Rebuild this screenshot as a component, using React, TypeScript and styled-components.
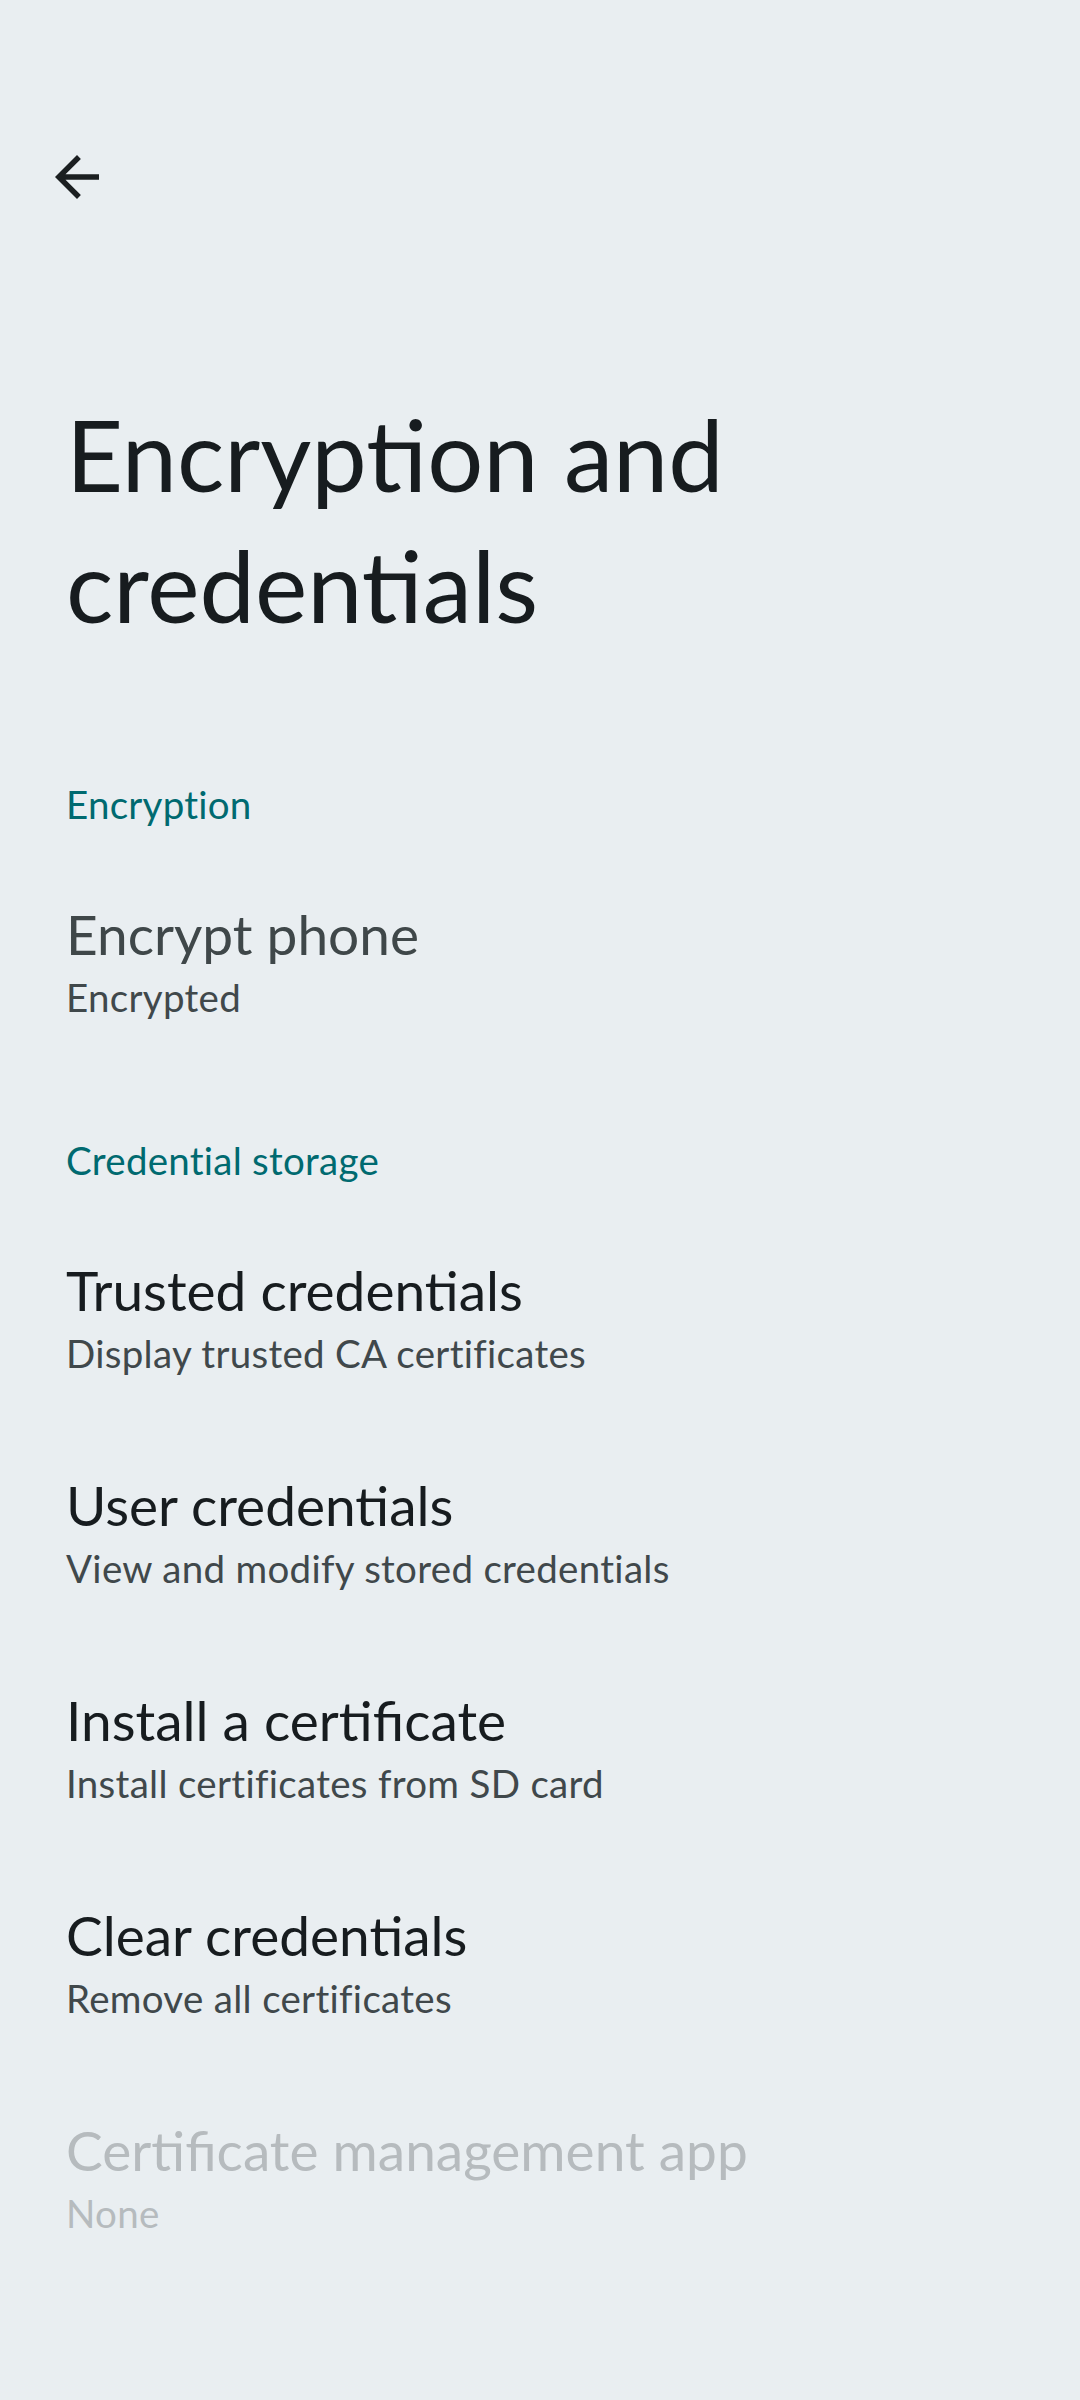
import React from "react";
import styled, { createGlobalStyle } from "styled-components";

const GlobalStyle = createGlobalStyle`
  html, body {
    margin: 0;
    padding: 0;
    background: #e9eef1;
  }
  body {
    font-family: Lato, "Open Sans", sans-serif;
    -webkit-font-smoothing: antialiased;
  }
`;

type Pref = {
    title: string;
    summary: string;
    tone?: "normal" | "muted" | "disabled";
};

const sections: { header: string; items: Pref[] }[] = [
    {
        header: "Encryption",
        items: [{ title: "Encrypt phone", summary: "Encrypted", tone: "muted" }],
    },
    {
        header: "Credential storage",
        items: [
            { title: "Trusted credentials", summary: "Display trusted CA certificates" },
            { title: "User credentials", summary: "View and modify stored credentials" },
            { title: "Install a certificate", summary: "Install certificates from SD card" },
            { title: "Clear credentials", summary: "Remove all certificates" },
            { title: "Certificate management app", summary: "None", tone: "disabled" },
        ],
    },
];

function BackArrow() {
    return (
        <svg width="66" height="66" viewBox="0 0 24 24" fill="#1b1f21">
            <path d="M20 11H7.83l5.59-5.59L12 4l-8 8 8 8 1.41-1.41L7.83 13H20v-2z" />
        </svg>
    );
}

export default function App() {
    return (
        <Page>
            <GlobalStyle />
            <Toolbar>
                <BackButton aria-label="Back">
                    <BackArrow />
                </BackButton>
            </Toolbar>
            <Title>Encryption and credentials</Title>
            {sections.map((section) => (
                <Section key={section.header}>
                    <Header>{section.header}</Header>
                    {section.items.map((item) => (
                        <Item key={item.title}>
                            <ItemTitle tone={item.tone}>{item.title}</ItemTitle>
                            <ItemSummary tone={item.tone}>{item.summary}</ItemSummary>
                        </Item>
                    ))}
                </Section>
            ))}
        </Page>
    );
}

const Page = styled.div`
    min-height: 2400px;
    background: #e9eef1;
    display: flex;
    flex-direction: column;
`;

const Toolbar = styled.div`
    display: flex;
    align-items: center;
    padding: 144px 0 0 44px;
`;

const BackButton = styled.button`
    width: 66px;
    height: 66px;
    padding: 0;
    border: 0;
    background: transparent;
    display: flex;
    align-items: center;
    justify-content: center;
`;

const Title = styled.h1`
    margin: 178px 0 0;
    padding: 0 300px 0 66px;
    font-size: 99px;
    line-height: 131px;
    font-weight: 400;
    color: #171c1f;
`;

const Section = styled.section`
    display: flex;
    flex-direction: column;
    &:first-of-type {
        margin-top: 64px;
    }
`;

const Header = styled.div`
    padding: 67px 66px 28px;
    font-size: 38.5px;
    line-height: 46px;
    letter-spacing: 0.25px;
    color: #006a70;
`;

const Item = styled.div`
    padding: 44px 66px;
    display: flex;
    flex-direction: column;
`;

const titleColor = (tone?: string) =>
    tone === "disabled" ? "#b6bbbe" : tone === "muted" ? "#3f4749" : "#171c1f";

const summaryColor = (tone?: string) =>
    tone === "disabled" ? "#b6bbbe" : "#40484b";

const ItemTitle = styled.div<{ tone?: string }>`
    font-size: 55px;
    line-height: 70px;
    color: ${(p) => titleColor(p.tone)};
`;

const ItemSummary = styled.div<{ tone?: string }>`
    font-size: 38.5px;
    line-height: 57px;
    letter-spacing: 0.3px;
    color: ${(p) => summaryColor(p.tone)};
`;
